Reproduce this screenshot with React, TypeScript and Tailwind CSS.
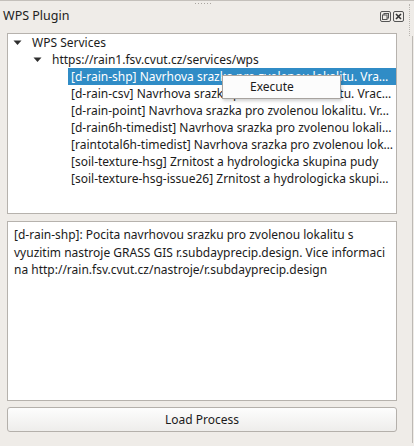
import React from "react";

const rows = [
  "[d-rain-shp] Navrhova srazka pro zvolenou lokalitu. Vra…",
  "[d-rain-csv] Navrhova srazka pro zvolenou lokalitu. Vrac…",
  "[d-rain-point] Navrhova srazka pro zvolenou lokalitu. Vr…",
  "[d-rain6h-timedist] Navrhova srazka pro zvolenou lokali…",
  "[raintotal6h-timedist] Navrhova srazka pro zvolenou lok…",
  "[soil-texture-hsg] Zrnitost a hydrologicka skupina pudy",
  "[soil-texture-hsg-issue26] Zrnitost a hydrologicka skupi…",
];

const Arrow = () => (
  <svg width="9" height="6" viewBox="0 0 9 6" className="shrink-0">
    <path d="M0.5 0.5 L8.5 0.5 L4.5 5 Z" fill="#2e2e2e" />
  </svg>
);

const App = () => {
  return (
    <div
      className="relative w-[414px] h-[446px] overflow-hidden bg-[#efece8] text-[12px] text-[#1b1b1b]"
      style={{ fontFamily: '"Noto Sans", "Open Sans", sans-serif' }}
    >
      {/* top edge + splitter grip */}
      <div className="h-px bg-[#c4c0bb]" />
      <div className="absolute left-[195px] top-[3px] flex gap-[2px]">
        {[0, 1, 2, 3, 4, 5].map((i) => (
          <div key={i} className="w-px h-px bg-[#a9a5a0]" />
        ))}
      </div>
      {/* right edge of the dock */}
      <div className="absolute left-[409px] top-[4px] h-[32px] border-l border-dotted border-[#b9b5b0]" />
      <div className="absolute left-[412px] top-[36px] h-[407px] w-px bg-[#bdb9b4]" />

      {/* title bar */}
      <div className="flex items-center h-[34px] pl-[3px] pr-[10px] -mt-[2px]">
        <span className="text-[12.5px] text-[#222]">WPS Plugin</span>
        <div className="ml-auto flex gap-[2px] items-center">
          <svg width="11" height="11" viewBox="0 0 11 11">
            <rect x="0.5" y="0.5" width="10" height="10" rx="1.5" fill="none" stroke="#555" />
            <rect x="4" y="2.5" width="4.5" height="4.5" fill="none" stroke="#555" />
            <rect x="2.5" y="4" width="4.5" height="4.5" fill="#efece8" stroke="#555" />
          </svg>
          <svg width="11" height="11" viewBox="0 0 11 11">
            <rect x="0.5" y="0.5" width="10" height="10" rx="1.5" fill="none" stroke="#555" />
            <path d="M3 3 L8 8 M8 3 L3 8" stroke="#333" strokeWidth="1.6" />
          </svg>
        </div>
      </div>

      <div className="flex flex-col pl-[7px] pr-[17px]">
        {/* tree */}
        <div className="relative h-[181px] bg-white border border-[#b6b2ad] overflow-hidden">
          <div className="flex items-center h-[17px] pl-[5px] gap-[10px]">
            <Arrow />
            <span>WPS Services</span>
          </div>
          <div className="flex items-center h-[17px] pl-[25px] gap-[10px]">
            <Arrow />
            <span>https://rain1.fsv.cvut.cz/services/wps</span>
          </div>
          {rows.map((r, i) => (
            <div
              key={r}
              className={
                i === 0
                  ? "ml-[60px] h-[17px] flex items-center pl-[3px] bg-[#308cc6] text-white whitespace-nowrap overflow-hidden"
                  : "ml-[60px] h-[17px] flex items-center pl-[3px] whitespace-nowrap overflow-hidden"
              }
            >
              {r}
            </div>
          ))}

          {/* context menu */}
          <div className="absolute left-[214px] top-[41px] w-[119px] h-[24px] bg-[#fcfcfc] border border-[#a7a39f] shadow-[1px_2px_3px_rgba(0,0,0,0.18)] flex items-center pl-[27px]">
            Execute
          </div>
        </div>

        {/* description */}
        <div className="mt-[7px] h-[180px] bg-white border border-[#b6b2ad] px-[6px] pt-[4px] leading-[17.5px]">
          [d-rain-shp]: Pocita navrhovou srazku pro zvolenou lokalitu s vyuzitim nastroje GRASS GIS
          r.subdayprecip.design. Vice informaci na http://rain.fsv.cvut.cz/nastroje/r.subdayprecip.design
        </div>

        {/* button */}
        <button className="mt-[6px] h-[25px] rounded-[3px] border border-[#b4b0ab] bg-gradient-to-b from-[#fdfdfd] to-[#eeedeb] text-[#1b1b1b]">
          Load Process
        </button>
      </div>
    </div>
  );
};

export default App;
